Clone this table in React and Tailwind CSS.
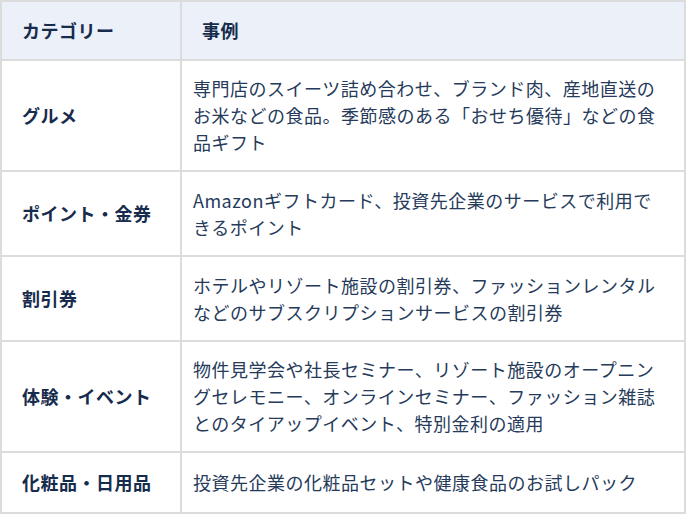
import React from 'react';

const ROWS = [
  {
    category: 'グルメ',
    text: '専門店のスイーツ詰め合わせ、ブランド肉、産地直送のお米などの食品。季節感のある「おせち優待」などの食品ギフト',
    h: 'h-[111px]',
  },
  {
    category: 'ポイント・金券',
    text: 'Amazonギフトカード、投資先企業のサービスで利用できるポイント',
    h: 'h-[85px]',
  },
  {
    category: '割引券',
    text: 'ホテルやリゾート施設の割引券、ファッションレンタルなどのサブスクリプションサービスの割引券',
    h: 'h-[85px]',
  },
  {
    category: '体験・イベント',
    text: '物件見学会や社長セミナー、リゾート施設のオープニングセレモニー、オンラインセミナー、ファッション雑誌とのタイアップイベント、特別金利の適用',
    h: 'h-[111px]',
  },
  {
    category: '化粧品・日用品',
    text: '投資先企業の化粧品セットや健康食品のお試しパック',
    h: 'h-[61px]',
  },
];

export default function App() {
  return (
    <div className="w-[686px] h-[515px] bg-white font-['Noto_Sans_CJK_JP','Noto_Sans',sans-serif] text-[18px] leading-[27px] tracking-[0.5px]">
      <div className="border-2 border-[#dcdcdc]">
        {/* Header */}
        <div className="flex h-[57px] bg-[#ebf0f9] font-bold text-[#172c4d]">
          <div className="w-[180px] shrink-0 border-r-2 border-[#dcdcdc] flex items-center pl-[20px]">
            カテゴリー
          </div>
          <div className="flex-1 flex items-center pl-[20px]">事例</div>
        </div>

        {ROWS.map((row) => (
          <div key={row.category} className={`flex border-t-2 border-[#dcdcdc] ${row.h}`}>
            <div className="w-[180px] shrink-0 border-r-2 border-[#dcdcdc] flex items-center pl-[20px] font-bold text-[#172c4d]">
              {row.category}
            </div>
            <div className="flex-1 flex items-center pl-[11px] pr-[20px] text-[#263a5a]">
              <p>{row.text}</p>
            </div>
          </div>
        ))}
      </div>
    </div>
  );
}
